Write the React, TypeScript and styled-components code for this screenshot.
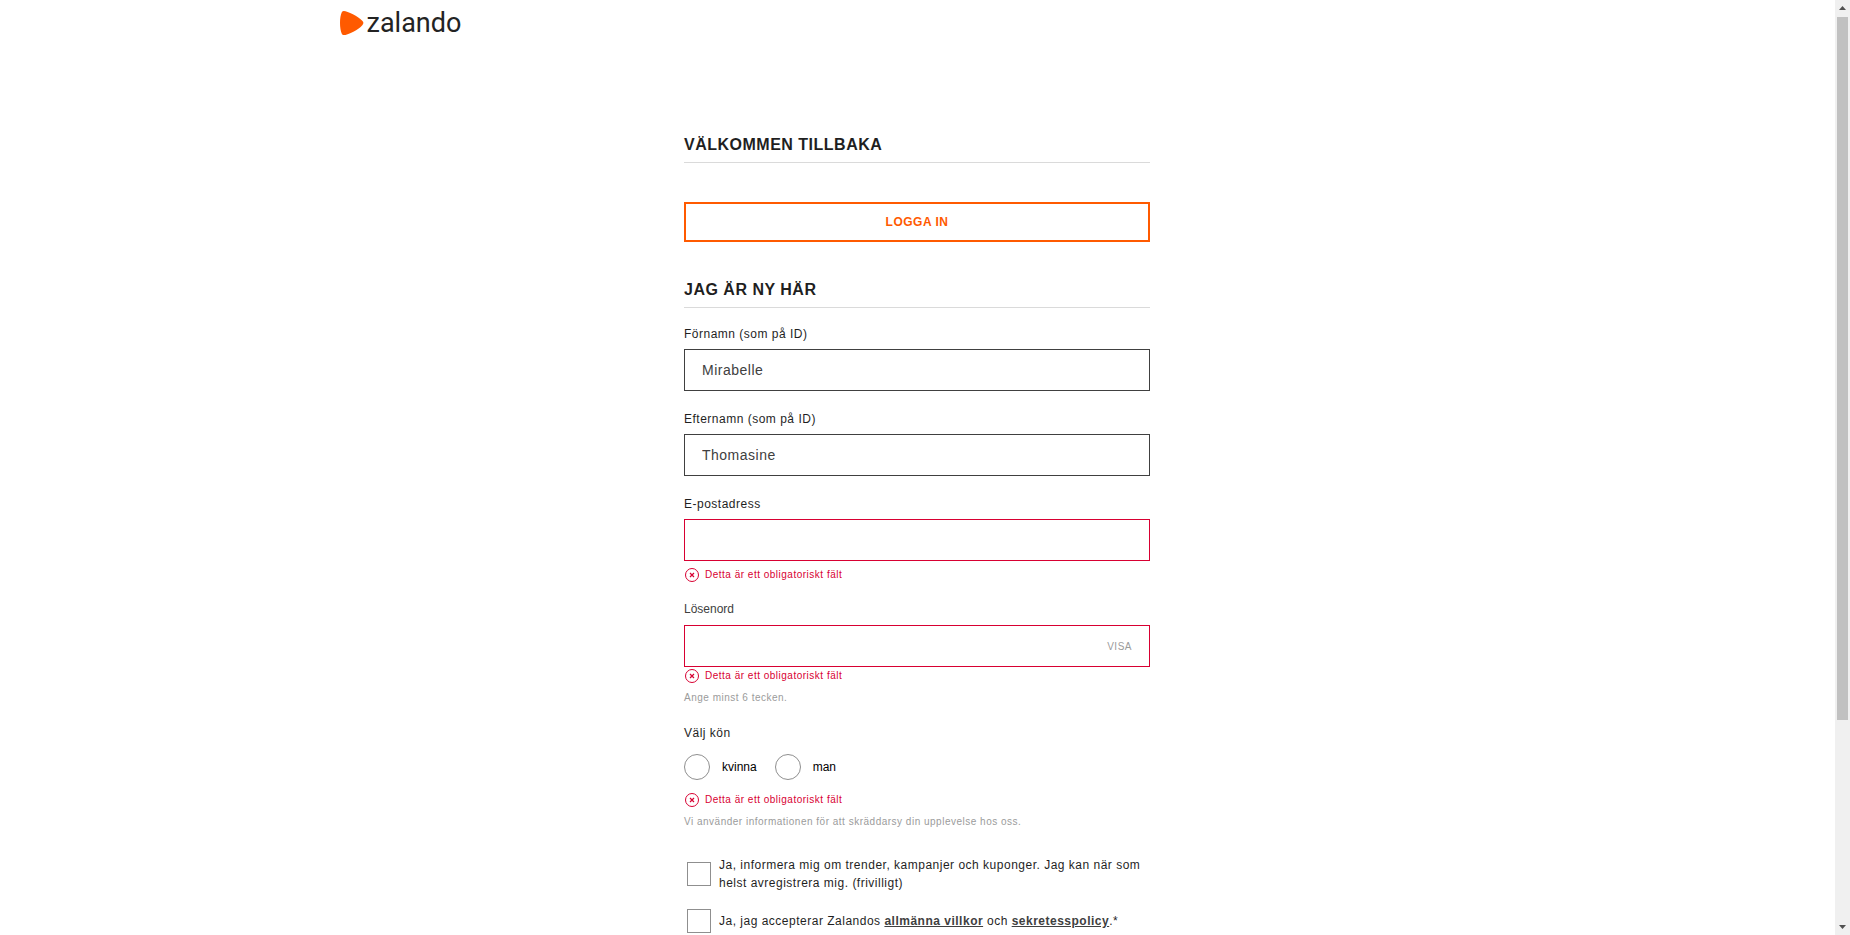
import React, { useState } from "react";
import styled, { createGlobalStyle } from "styled-components";

const GlobalStyle = createGlobalStyle`
  * { box-sizing: border-box; }
  body {
    margin: 0;
    background: #fff;
    color: #1f1f1f;
    font-family: "Liberation Sans", Arial, sans-serif;
  }
`;

const Window = styled.div`
  display: flex;
  height: 100vh;
  overflow: hidden;
`;

const Page = styled.div`
  flex: 1;
  min-width: 0;
`;

const Header = styled.header`
  max-width: 1156px;
  margin: 0 auto;
  padding-top: 8px;
`;

const LogoLink = styled.a`
  display: flex;
  align-items: center;
  gap: 3px;
  width: fit-content;
  height: 30px;
  color: #232323;
  font: 400 27px/30px Roboto, sans-serif;
  text-decoration: none;
`;

const Main = styled.main`
  max-width: 467px;
  margin: 95px auto 0;
  padding-right: 1px;
  font-size: 10px;
  letter-spacing: 0.05em;
`;

const Heading = styled.h2`
  margin: 0;
  padding-bottom: 5px;
  border-bottom: 1px solid #dadada;
  font-size: 16px;
  line-height: 24px;
  font-weight: 700;
  text-transform: uppercase;
`;

const LoginButton = styled.button`
  display: block;
  width: 100%;
  height: 40px;
  margin: 39px 0 36px;
  padding: 0;
  border: 2px solid #ff5a00;
  background: #fff;
  color: #ff5a00;
  font: inherit;
  font-size: 12px;
  font-weight: 700;
  letter-spacing: inherit;
  text-transform: uppercase;
  cursor: pointer;
`;

const Form = styled.form`
  display: flex;
  flex-direction: column;
  gap: 19px;
  padding-top: 17px;
`;

const Field = styled.div<{ $tight?: boolean }>`
  display: flex;
  flex-direction: column;
  margin-top: ${(p) => (p.$tight ? "-1px" : "0")};
`;

const Label = styled.label<{ $plain?: boolean }>`
  margin-bottom: ${(p) => (p.$plain ? "7px" : "6px")};
  font-size: 12px;
  line-height: 18px;
  color: ${(p) => (p.$plain ? "#404040" : "#1f1f1f")};
  letter-spacing: ${(p) => (p.$plain ? "normal" : "inherit")};
`;

const InputBox = styled.div<{ $invalid?: boolean }>`
  display: flex;
  align-items: center;
  height: 42px;
  padding: 0 17px;
  border: 1px solid ${(p) => (p.$invalid ? "#d80032" : "#404040")};
`;

const Input = styled.input`
  flex: 1;
  min-width: 0;
  height: 40px;
  padding: 0;
  border: 0;
  outline: 0;
  background: transparent;
  color: #404040;
  font: inherit;
  font-size: 14px;
  letter-spacing: inherit;
`;

const ShowButton = styled.button`
  padding: 0;
  border: 0;
  background: none;
  color: #9b9b9b;
  font: inherit;
  letter-spacing: inherit;
  text-transform: uppercase;
  cursor: pointer;
`;

const ErrorRow = styled.p<{ $gap: number }>`
  display: flex;
  align-items: center;
  gap: 6px;
  margin: ${(p) => p.$gap}px 0 0;
  line-height: 14px;
  color: #d80032;
`;

const ErrorMark = styled.svg`
  width: 15px;
  height: 14px;
  fill: none;
  stroke: currentColor;
`;

const Hint = styled.p`
  margin: 8px 0 0;
  line-height: 14px;
  color: #9b9b9b;
`;

const Group = styled.fieldset`
  display: block;
  min-width: 0;
  margin: 0;
  padding: 0;
  border: 0;
`;

const Legend = styled.legend`
  padding: 0;
  font-size: 12px;
  line-height: 18px;
`;

const RadioRow = styled.div`
  display: flex;
  gap: 18px;
  padding-top: 12px;
`;

const RadioLabel = styled.label`
  display: flex;
  align-items: center;
  gap: 12px;
  color: #000;
  font-size: 12px;
  line-height: 18px;
  letter-spacing: normal;
`;

const Radio = styled.input`
  appearance: none;
  width: 26px;
  height: 26px;
  margin: 0;
  border: 1px solid #8f8f8f;
  border-radius: 50%;
  &:checked { background: radial-gradient(#404040 40%, transparent 45%); }
`;

const Consents = styled.div`
  display: flex;
  flex-direction: column;
  gap: 17px;
  padding-top: 8px;
`;

const ConsentRow = styled.div`
  display: flex;
  align-items: center;
  gap: 8px;
  padding-left: 3px;
  font-size: 12px;
  line-height: 18px;
`;

const Checkbox = styled.input`
  appearance: none;
  flex: none;
  width: 24px;
  height: 24px;
  margin: 0;
  border: 1px solid #8f8f8f;
  &:checked { background: #404040; }
`;

const TermsLink = styled.a`
  color: #404040;
  font-weight: 700;
  text-decoration: underline;
`;

const Scrollbar = styled.div`
  display: flex;
  flex-direction: column;
  align-items: center;
  width: 15px;
  background: #f0f0f0;
`;

const ScrollArrow = styled.svg`
  flex: none;
  width: 15px;
  height: 17px;
  fill: #505050;
`;

const ScrollTrack = styled.div`
  flex: 1;
  width: 11px;
`;

const ScrollThumb = styled.div`
  height: 78%;
  background: #c1c1c1;
`;

function RequiredError({ gap }: { gap: number }) {
  return (
    <ErrorRow $gap={gap}>
      <ErrorMark viewBox="0 0 15 14" aria-hidden="true">
        <circle cx="8" cy="7" r="6.5" />
        <path d="M6 5l4 4M10 5l-4 4" strokeWidth="1.2" />
      </ErrorMark>
      Detta är ett obligatoriskt fält
    </ErrorRow>
  );
}

export default function App() {
  const [visible, setVisible] = useState(false);
  return (
    <Window>
      <GlobalStyle />
      <Page>
        <Header>
          <LogoLink href="#">
            <svg width="24" height="26" viewBox="0 0 24 26" aria-hidden="true">
              <path
                fill="#ff5a00"
                d="M3.9 25.1C3 25.1 2.3 24.6 1.9 23.9C.6 21.2 0 17.2 0 13C0 8.7.6 4.8 1.9 2.1C2.3 1.3 3 .9 3.9.9C7.3.9 18.4 6 22.5 11.1C23.7 12.5 23.7 13.6 22.5 14.9C18.4 20 7.3 25.1 3.9 25.1Z"
              />
            </svg>
            zalando
          </LogoLink>
        </Header>
        <Main>
          <Heading>Välkommen tillbaka</Heading>
          <LoginButton type="button">Logga in</LoginButton>
          <Heading>Jag är ny här</Heading>
          <Form noValidate onSubmit={(e) => e.preventDefault()}>
            <Field>
              <Label htmlFor="firstname">Förnamn (som på ID)</Label>
              <InputBox>
                <Input id="firstname" type="text" defaultValue="Mirabelle" />
              </InputBox>
            </Field>
            <Field>
              <Label htmlFor="lastname">Efternamn (som på ID)</Label>
              <InputBox>
                <Input id="lastname" type="text" defaultValue="Thomasine" />
              </InputBox>
            </Field>
            <Field>
              <Label htmlFor="email">E-postadress</Label>
              <InputBox $invalid>
                <Input id="email" type="email" />
              </InputBox>
              <RequiredError gap={7} />
            </Field>
            <Field $tight>
              <Label htmlFor="password" $plain>Lösenord</Label>
              <InputBox $invalid>
                <Input id="password" type={visible ? "text" : "password"} />
                <ShowButton type="button" onClick={() => setVisible(!visible)}>
                  Visa
                </ShowButton>
              </InputBox>
              <RequiredError gap={2} />
              <Hint>Ange minst 6 tecken.</Hint>
            </Field>
            <Group>
              <Legend>Välj kön</Legend>
              <RadioRow>
                <RadioLabel>
                  <Radio type="radio" name="gender" value="female" />
                  kvinna
                </RadioLabel>
                <RadioLabel>
                  <Radio type="radio" name="gender" value="male" />
                  man
                </RadioLabel>
              </RadioRow>
              <RequiredError gap={13} />
              <Hint>Vi använder informationen för att skräddarsy din upplevelse hos oss.</Hint>
            </Group>
            <Consents>
              <ConsentRow>
                <Checkbox id="newsletter" type="checkbox" />
                <label htmlFor="newsletter">
                  Ja, informera mig om trender, kampanjer och kuponger. Jag kan när som helst
                  avregistrera mig. (frivilligt)
                </label>
              </ConsentRow>
              <ConsentRow>
                <Checkbox id="terms" type="checkbox" />
                <label htmlFor="terms">
                  Ja, jag accepterar Zalandos <TermsLink href="#">allmänna villkor</TermsLink> och{" "}
                  <TermsLink href="#">sekretesspolicy</TermsLink>.*
                </label>
              </ConsentRow>
            </Consents>
          </Form>
        </Main>
      </Page>
      <Scrollbar aria-hidden="true">
        <ScrollArrow viewBox="0 0 15 17">
          <path d="M4 10h7L7.5 6z" />
        </ScrollArrow>
        <ScrollTrack>
          <ScrollThumb />
        </ScrollTrack>
        <ScrollArrow viewBox="0 0 15 17">
          <path d="M4 7h7L7.5 11z" />
        </ScrollArrow>
      </Scrollbar>
    </Window>
  );
}
